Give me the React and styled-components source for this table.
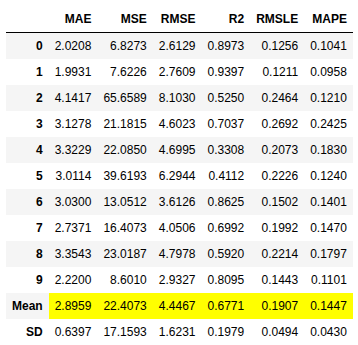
import React from 'react';
import styled, { createGlobalStyle } from 'styled-components';

const GlobalStyle = createGlobalStyle`
  body {
    margin: 0;
    background: #ffffff;
    font-family: "Liberation Sans", Arial, sans-serif;
  }
`;

const columns = ['MAE', 'MSE', 'RMSE', 'R2', 'RMSLE', 'MAPE'];

const rows = [
  ['0', '2.0208', '6.8273', '2.6129', '0.8973', '0.1256', '0.1041'],
  ['1', '1.9931', '7.6226', '2.7609', '0.9397', '0.1211', '0.0958'],
  ['2', '4.1417', '65.6589', '8.1030', '0.5250', '0.2464', '0.1210'],
  ['3', '3.1278', '21.1815', '4.6023', '0.7037', '0.2692', '0.2425'],
  ['4', '3.3229', '22.0850', '4.6995', '0.3308', '0.2073', '0.1830'],
  ['5', '3.0114', '39.6193', '6.2944', '0.4112', '0.2226', '0.1240'],
  ['6', '3.0300', '13.0512', '3.6126', '0.8625', '0.1502', '0.1401'],
  ['7', '2.7371', '16.4073', '4.0506', '0.6992', '0.1992', '0.1470'],
  ['8', '3.3543', '23.0187', '4.7978', '0.5920', '0.2214', '0.1797'],
  ['9', '2.2200', '8.6010', '2.9327', '0.8095', '0.1443', '0.1101'],
  ['Mean', '2.8959', '22.4073', '4.4467', '0.6771', '0.1907', '0.1447'],
  ['SD', '0.6397', '17.1593', '1.6231', '0.1979', '0.0494', '0.0430'],
];

export default function App() {
  return (
    <>
      <GlobalStyle />
      <Output>
        <Frame>
          <thead>
            <tr>
              <HeadCell />
              {columns.map((c) => (
                <HeadCell key={c}>{c}</HeadCell>
              ))}
            </tr>
          </thead>
          <tbody>
            {rows.map(([label, ...values], i) => (
              <Row key={label} striped={i % 2 === 0}>
                <IndexCell>{label}</IndexCell>
                {values.map((v, j) => (
                  <Cell key={j} highlight={label === 'Mean'}>{v}</Cell>
                ))}
              </Row>
            ))}
          </tbody>
        </Frame>
      </Output>
    </>
  );
}

const Output = styled.div`
  padding: 6px 0 0 6px;
`;

const Frame = styled.table`
  border-collapse: collapse;
  border: none;
  font-size: 12px;
  line-height: 14px;
  color: #000000;

  thead {
    border-bottom: 1px solid #000000;
  }
`;

const HeadCell = styled.th`
  text-align: right;
  font-weight: bold;
  padding: 6px;
  white-space: nowrap;
`;

const Row = styled.tr`
  background: ${(p) => (p.striped ? '#f5f5f5' : '#ffffff')};
`;

const IndexCell = styled.th`
  text-align: right;
  font-weight: bold;
  padding: 6px;
`;

const Cell = styled.td`
  text-align: right;
  padding: 6px;
  white-space: nowrap;
  background: ${(p) => (p.highlight ? '#ffff00' : 'transparent')};
`;
